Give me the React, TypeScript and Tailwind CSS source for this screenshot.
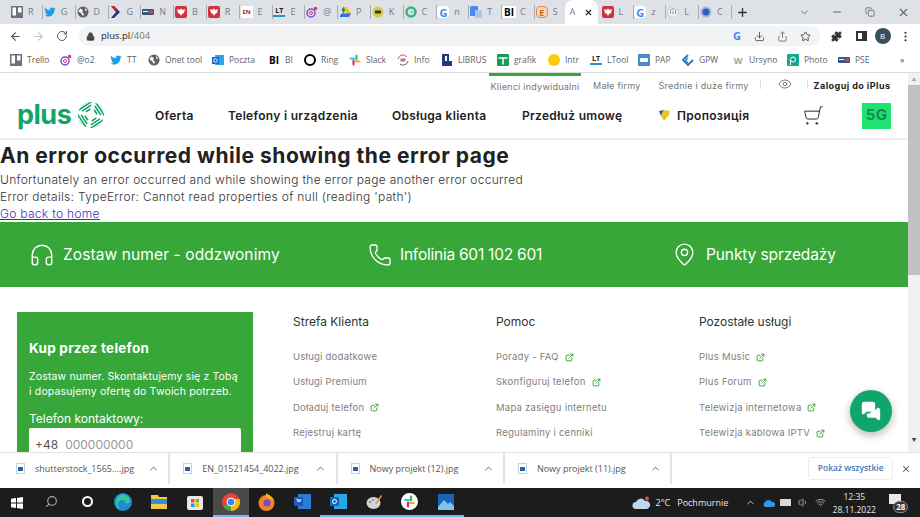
import type { ReactNode } from 'react'
import { ArrowLeft, ArrowRight, ChevronDown, ChevronUp, Eye, Lock, MoreVertical, Plus, Puzzle, RotateCw, Search, Share, ShoppingCart, Star, X, Minus, Copy, Download, Headphones, Phone, MapPin, ExternalLink, MessagesSquare, Volume1, Wifi } from 'lucide-react'

const chrome = 'font-["Open_Sans",sans-serif]'
const site = 'font-["Inter",sans-serif]'

// small coloured favicon squares for the tab strip and bookmarks bar
function Fav({ kind }: { kind: string }) {
  switch (kind) {
    case 'trello':
      return (
        <svg width="12" height="12" viewBox="0 0 12 12"><rect width="12" height="12" fill="#6b7378" /><rect x="1.5" y="1.5" width="3.5" height="8" fill="#fff" /><rect x="7" y="1.5" width="3.5" height="5" fill="#fff" /></svg>
      )
    case 'twitter':
      return (
        <svg width="12" height="12" viewBox="0 0 24 24"><path fill="#1d9bf0" d="M23 4.9c-.8.4-1.7.6-2.6.8.9-.6 1.6-1.4 2-2.5-.9.5-1.8.9-2.9 1.1a4.6 4.6 0 0 0-7.8 4.2C8 8.300 4.600 6.500 2.400 3.700c-1.200 2.100-.6 4.700 1.400 6.100-.7 0-1.400-.2-2.100-.6 0 2.200 1.600 4.100 3.700 4.600-.7.2-1.400.2-2.100.1.6 1.900 2.300 3.200 4.300 3.200A9.300 9.300 0 0 1 .8 19c2.100 1.300 4.500 2.100 7.100 2.100 8.500 0 13.300-7.200 13-13.600.9-.7 1.600-1.500 2.100-2.600z" /></svg>
      )
    case 'globe':
      return (
        <svg width="12" height="12" viewBox="0 0 12 12"><circle cx="6" cy="6" r="5.500" fill="#5f6368" /><path d="M3 2.500 6 4 5 6 7 8 6 10 4 7 1.500 5.500z M8 2l2 2-1.500 1.500z" fill="#fff" /></svg>
      )
    case 'chevron':
      return (
        <svg width="12" height="12" viewBox="0 0 12 12"><path d="M2 0 5 0 11 6 5 12 2 12 7 6z" fill="#20367a" /><path d="M2 0 5 0 8.500 3.500 6 5z" fill="#d1232a" /></svg>
      )
    case 'card':
      return (
        <svg width="12" height="12" viewBox="0 0 12 12"><rect y="3" width="12" height="6" rx="1" fill="#3c5878" /><rect x="7" y="4.500" width="4" height="3" fill="#d3455a" /><rect x="1" y="5" width="5" height="1" fill="#fff" /></svg>
      )
    case 'eagle':
      return (
        <svg width="12" height="12" viewBox="0 0 12 12"><rect width="12" height="12" rx="2" fill="#d2303f" /><path d="M6 2 7 4 10 3 9 7 7 8 6 10 5 8 3 7 2 3 5 4z" fill="#fff" /></svg>
      )
    case 'en':
      return <span className="flex h-3 w-3 items-center justify-center bg-white text-[6px] font-bold leading-none text-[#9c2b35]">EN</span>
    case 'lt':
      return (
        <span className="flex h-3 w-3 flex-col items-center text-[7px] font-bold leading-[9px] text-[#222]">LT<span className="h-[1.500px] w-3 bg-[#2a90c8]" /></span>
      )
    case 'o2':
      return (
        <svg width="12" height="12" viewBox="0 0 12 12" fill="none"><circle cx="5" cy="7" r="4" stroke="#7a4bd8" strokeWidth="1.500" /><circle cx="5" cy="7" r="1.500" stroke="#e0357f" /><circle cx="9.500" cy="2.500" r="1.800" fill="#e0357f" /></svg>
      )
    case 'drive':
      return (
        <svg width="12" height="12" viewBox="0 0 12 12"><path d="M4 1h4l-3.500 6.500-2-3.500z" fill="#0f9d58" /><path d="M8 1l4 7h-4L4.500 1z" fill="#fbbc04" /><path d="M2.500 7.500H12L10 11H.5z" fill="#2f6fe0" /></svg>
      )
    case 'smile':
      return (
        <svg width="12" height="12" viewBox="0 0 12 12"><circle cx="6" cy="6" r="5.500" fill="#d7cb43" /><rect x="3" y="4.500" width="6" height="3" fill="#333" /></svg>
      )
    case 'green':
      return (
        <svg width="12" height="12" viewBox="0 0 12 12" fill="none"><circle cx="6" cy="6" r="4.500" stroke="#35b57f" strokeWidth="2.500" /><circle cx="7" cy="6" r="1.500" fill="#8ed9b8" /></svg>
      )
    case 'g':
      return <span className="flex h-3 w-3 items-center justify-center rounded-sm bg-white text-[11px] font-bold leading-none text-[#4285f4]">G</span>
    case 'translate':
      return (
        <svg width="12" height="12" viewBox="0 0 12 12"><rect width="8" height="10" rx="1" fill="#4d88ea" /><rect x="5" y="4" width="7" height="8" rx="1" fill="#a9c7f5" /></svg>
      )
    case 'bi':
      return <span className="flex h-3 w-3.5 items-center justify-center bg-white text-[10px] font-bold leading-none text-black">BI</span>
    case 'e':
      return <span className="flex h-3 w-3 items-center justify-center rounded-sm border border-[#e08a45] bg-[#f5d6b8] text-[9px] font-bold leading-none text-[#d06a20]">E</span>
    case 'gov':
      return (
        <svg width="12" height="12" viewBox="0 0 12 12" fill="none"><circle cx="6" cy="6" r="5.500" fill="#eef0f0" stroke="#b5bbbb" strokeWidth=".500" /><path d="M2.500 4.500 6 2.500l3.500 2M3.500 5v3M6 5v3M8.500 5v3" stroke="#7a8a8a" strokeWidth=".800" /></svg>
      )
    case 'wp':
      return (
        <svg width="12" height="12" viewBox="0 0 12 12"><circle cx="6" cy="6" r="5.500" fill="#9db8e0" /><circle cx="6" cy="6" r="3.500" fill="#2f5fb0" /></svg>
      )
    case 'outlook':
      return (
        <svg width="12" height="12" viewBox="0 0 12 12"><rect x="3" y="1" width="9" height="10" fill="#28a8ea" /><rect y="3" width="7" height="7" fill="#0f6cbd" /><circle cx="3.500" cy="6.500" r="1.800" fill="none" stroke="#fff" /></svg>
      )
    case 'ring':
      return <span className="block h-3 w-3 rounded-full border-[2.500px] border-black" />
    case 'slack':
      return (
        <svg width="12" height="12" viewBox="0 0 12 12" strokeWidth="2" strokeLinecap="round"><path d="M1.500 4.500h4" stroke="#36c5f0" /><path d="M7.500 1.500v4" stroke="#2eb67d" /><path d="M6.500 7.500h4" stroke="#ecb22e" /><path d="M4.500 6.500v4" stroke="#e01e5a" /></svg>
      )
    case 'info':
      return (
        <svg width="12" height="12" viewBox="0 0 12 12" fill="none"><path d="M1 5a5 5 0 0 1 9-2" stroke="#d9534f" /><path d="M11 7a5 5 0 0 1-8 3" stroke="#4a5a8a" /><rect x="3.500" y="4.500" width="5" height="3" fill="#c86a8a" /></svg>
      )
    case 'librus':
      return (
        <svg width="12" height="12" viewBox="0 0 12 12"><path d="M1 0h7v7h3v5H1z" fill="#1f3a7a" /><rect x="4" y="2" width="2" height="5" fill="#fff" /></svg>
      )
    case 'sheet':
      return (
        <svg width="12" height="12" viewBox="0 0 12 12"><rect width="12" height="12" rx="1" fill="#1a9a58" /><path d="M1.500 4h9M6 4v6.500" stroke="#fff" strokeWidth="1.500" /></svg>
      )
    case 'dot':
      return <span className="block h-3 w-3 rounded-full bg-[#fbcb0a]" />
    case 'pap':
      return (
        <svg width="12" height="12" viewBox="0 0 12 12"><rect width="12" height="12" fill="#4a8cc8" /><rect x="2" y="4" width="8" height="4" rx="1" fill="#fff" /></svg>
      )
    case 'gpw':
      return (
        <svg width="12" height="12" viewBox="0 0 12 12" fill="none"><path d="M6 1 1 6l5 5 5-5" stroke="#1f74c2" strokeWidth="1.800" /><path d="M6 4 3.500 6.500 6 9" stroke="#2a9ad8" strokeWidth="1.500" /></svg>
      )
    case 'ursyno':
      return <span className="flex h-3 w-3 items-center justify-center text-[9px] font-bold leading-none text-[#9aa39a]">W</span>
    case 'photo':
      return (
        <svg width="12" height="12" viewBox="0 0 12 12" fill="none"><rect width="12" height="12" rx="1" fill="#17a88f" /><circle cx="6" cy="5.500" r="2.500" stroke="#fff" /><path d="M3.500 5.500V11" stroke="#fff" /></svg>
      )
    default:
      return null
  }
}

const tabs = [
  ['trello', 'R'], ['twitter', 'G'], ['globe', 'D'], ['chevron', 'G'], ['card', 'N'], ['eagle', 'B'], ['eagle', 'R'],
  ['en', 'E'], ['lt', 'E'], ['o2', '@'], ['drive', 'P'], ['smile', 'K'], ['green', 'C'], ['g', 'n'], ['translate', 'T'],
  ['bi', 'C'], ['e', 'S'],
]
const tabsAfter = [['eagle', 'L'], ['g', 'z'], ['gov', 'L'], ['wp', 'C']]

const bookmarks = [
  { icon: 'trello', label: 'Trello', w: 'w-[50px]' },
  { icon: 'o2', label: '@o2', w: 'w-[50px]' },
  { icon: 'twitter', label: 'TT', w: 'w-[38px]' },
  { icon: 'globe', label: 'Onet tool', w: 'w-[64px]' },
  { icon: 'outlook', label: 'Poczta', w: 'w-[56px]' },
  { icon: 'bi', label: 'BI', w: 'w-[36px]' },
  { icon: 'ring', label: 'Ring', w: 'w-[45px]' },
  { icon: 'slack', label: 'Slack', w: 'w-[48px]' },
  { icon: 'info', label: 'Info', w: 'w-[44px]' },
  { icon: 'librus', label: 'LIBRUS', w: 'w-[56px]' },
  { icon: 'sheet', label: 'grafik', w: 'w-[51px]' },
  { icon: 'dot', label: 'Intr', w: 'w-[42px]' },
  { icon: 'lt', label: 'LTool', w: 'w-[48px]' },
  { icon: 'pap', label: 'PAP', w: 'w-[44px]' },
  { icon: 'gpw', label: 'GPW', w: 'w-[50px]' },
  { icon: 'ursyno', label: 'Ursyno', w: 'w-[55px]' },
  { icon: 'photo', label: 'Photo', w: 'w-[51px]' },
  { icon: 'card', label: 'PSE', w: 'w-[63px]' },
]

const columns = [
  { title: 'Strefa Klienta', links: [['Usługi dodatkowe', false], ['Usługi Premium', false], ['Doładuj telefon', true], ['Rejestruj kartę', false]] },
  { title: 'Pomoc', links: [['Porady - FAQ', true], ['Skonfiguruj telefon', true], ['Mapa zasięgu internetu', false], ['Regulaminy i cenniki', false]] },
  { title: 'Pozostałe usługi', links: [['Plus Music', true], ['Plus Forum', true], ['Telewizja internetowa', true], ['Telewizja kablowa IPTV', true]] },
] as const

const downloads = ['shutterstock_1565....jpg', 'EN_01521454_4022.jpg', 'Nowy projekt (12).jpg', 'Nowy projekt (11).jpg']

function Tab({ icon, letter }: { icon: string; letter: string }) {
  return (
    <div className="flex h-6 w-[32.8px] shrink-0 items-center gap-1 pl-[3px]">
      <span className="flex w-3.5 shrink-0 justify-center"><Fav kind={icon} /></span>
      <span className="w-[10px] shrink-0 text-[9px] text-[#777b80]">{letter}</span>
      <span className="h-[14px] border-r border-[#a9adb2]" />
    </div>
  )
}

function Logo() {
  return (
    <div className="mb-[3px] flex w-[86px] shrink-0 items-center gap-[7px]">
      <span className="text-[27px] font-bold leading-none tracking-[-0.5px] text-[#12a568]">plus</span>
      <svg width="26" height="26" viewBox="0 0 27 27" className="mt-[2px] shrink-0" fill="none" stroke="#12a568" strokeWidth="1.700">
        <defs><clipPath id="plus-circle"><circle cx="13.500" cy="13.500" r="13.500" /></clipPath></defs>
        <g clipPath="url(#plus-circle)">
          <g transform="rotate(12 13.500 13.500)">
            {[0, 90, 180, 270].map((r) => (
              <path key={r} transform={`rotate(${r} 13.500 13.500)`} d="M15.500 7.500 19.500 11.500M15.500 3.500 23.500 11.500M15.500 -.5 27.500 11.500M19 -1 29 9" />
            ))}
          </g>
        </g>
      </svg>
    </div>
  )
}

function Edge() {
  return (
    <svg width="18" height="18" viewBox="0 0 18 18"><circle cx="9" cy="9" r="9" fill="#1b8ed2" /><path d="M2 9a7 7 0 0 1 14-1c0 3-5 3-5 1 0-3-7-3-7 3 0 2 1 4 3 5-3 0-5-4-5-8z" fill="#36c5a0" /></svg>
  )
}

function Slot({ children, running }: { children: ReactNode; running?: boolean }) {
  return (
    <div className={`flex h-[29px] w-[35.8px] shrink-0 items-center justify-center border-b-2 ${running ? 'border-[#76b9ed]' : 'border-transparent'}`}>
      {children}
    </div>
  )
}

export default function App() {
  return (
    <div className={`flex h-[517px] w-[920px] flex-col overflow-hidden bg-white ${chrome}`}>
      {/* tab strip */}
      <div className="flex h-6 shrink-0 items-center bg-[#dee1e6] pl-[7px]">
        {tabs.map(([icon, letter], i) => <Tab key={i} icon={icon} letter={letter} />)}
        <div className="flex h-6 w-[33px] shrink-0 items-center justify-between rounded-t-lg bg-white px-[5px]">
          <span className="text-[9px] text-[#777b80]">A</span>
          <X size={9} strokeWidth={3} className="text-[#222]" />
        </div>
        {tabsAfter.map(([icon, letter], i) => <Tab key={i} icon={icon} letter={letter} />)}
        <Plus size={13} strokeWidth={2.500} className="ml-[7px] text-[#333]" />
        <ChevronDown size={11} className="ml-[50px] text-[#666]" />
        <Minus size={12} className="ml-[21.500px] text-[#666]" />
        <Copy size={10} className="ml-[22px] text-[#666]" />
        <X size={13} className="ml-[21.500px] text-[#666]" />
      </div>

      {/* address bar */}
      <div className="flex h-6 shrink-0 items-center bg-white pl-[9px]">
        <ArrowLeft size={13} className="text-[#555]" />
        <ArrowRight size={13} className="ml-[10px] text-[#c3c5c8]" />
        <RotateCw size={12} className="ml-[11px] text-[#555]" />
        <div className="ml-[11px] flex h-5 w-[569px] items-center rounded-l-full bg-[#f1f3f4] pl-[7px]">
          <Lock size={9} fill="#444" className="text-[#444]" />
          <span className="ml-[6px] text-[9.500px] text-[#222]">plus.pl<span className="text-[#70757a]">/404</span></span>
        </div>
        <div className="flex h-5 w-[172px] items-center rounded-r-full bg-[#f1f3f4] pl-[85px]">
          <span className="text-[11px] font-bold text-[#4285f4]">G</span>
          <Download size={11} className="ml-[13px] text-[#555]" />
          <Share size={11} className="ml-[12px] text-[#777]" />
          <Star size={11} className="ml-[12px] text-[#444]" />
        </div>
        <Puzzle size={11} fill="#333" className="ml-[10.500px] text-[#333]" />
        <span className="ml-[14px] block h-[10px] w-[11px] border-2 border-r-[5px] border-[#333]" />
        <span className="ml-[8px] flex h-4 w-4 items-center justify-center rounded-full bg-[#37505f] text-[8px] text-white">B</span>
        <MoreVertical size={13} className="ml-[8.500px] text-[#333]" />
      </div>

      {/* bookmarks */}
      <div className="flex h-[25px] shrink-0 items-center border-b border-[#dadce0] pl-[9px]">
        {bookmarks.map((b) => (
          <div key={b.label} className={`flex shrink-0 items-center gap-[4px] ${b.w}`}>
            <span className="flex w-3.5 justify-center"><Fav kind={b.icon} /></span>
            <span className="text-[8.500px] text-[#5f6368]">{b.label}</span>
          </div>
        ))}
        <span className="text-[9px] text-[#555]">»</span>
      </div>

      {/* page */}
      <div className={`relative flex h-[379px] shrink-0 overflow-hidden ${site}`}>
        <div className="w-[908px] shrink-0">
          <header className="h-[67px] border-b-[2px] border-[#f0f0f0]">
            <div className="flex h-[22px] pl-[489px] text-[9px] tracking-[0.25px] text-[#777]">
              <span className="flex h-full w-[92px] items-center justify-center border-t-[3px] border-[#36a738] pt-[3px]">Klienci indywidualni</span>
              <span className="ml-[12px] flex items-center pt-[3px]">Małe firmy</span>
              <span className="ml-[18px] flex items-center pt-[3px]">Średnie i duże firmy</span>
              <span className="ml-[11px] mt-[7px] h-[9px] border-l border-[#ddd]" />
              <Eye size={14} strokeWidth={1.200} className="ml-[17px] mt-[4px] text-[#444]" />
              <span className="ml-[15px] mt-[7px] h-[9px] border-l border-[#ddd]" />
              <span className="ml-[6px] flex items-center pt-[3px] font-bold tracking-[0.45px] text-[#222]">Zaloguj do iPlus</span>
            </div>
            <div className="flex h-[43px] items-center whitespace-nowrap pb-[2px] pl-[17px] text-[12px] font-semibold tracking-[0.3px] text-[#222]">
              <Logo />
              <span className="ml-[52px] w-[38px] shrink-0">Oferta</span>
              <span className="ml-[35px] w-[129px] shrink-0">Telefony i urządzenia</span>
              <span className="ml-[35px] w-[95px] shrink-0">Obsługa klienta</span>
              <span className="ml-[35px] w-[101px] shrink-0">Przedłuż umowę</span>
              <svg width="13" height="11" viewBox="0 0 13 11" className="ml-[35px] shrink-0"><path d="M1 1 6 0 3 6z" fill="#2f5fb0" /><path d="M6 0 12 1 11 5 6 11 3 6z" fill="#f0c419" /></svg>
              <span className="ml-[6px] w-[74px] shrink-0">Пропозиція</span>
              <ShoppingCart size={21} strokeWidth={1.100} className="ml-[52px] shrink-0 -scale-x-100 text-[#222]" />
              <span className="ml-[38px] flex h-[26px] w-[29px] shrink-0 items-center justify-center bg-[#1ee36f] text-[15px] font-bold text-[#0f8a55]">5G</span>
            </div>
          </header>
          <main className="pt-[4px] text-[#333]">
            <h1 className="text-[21px] font-bold leading-[24px] tracking-[0.53px] text-[#222]">An error occurred while showing the error page</h1>
            <p className="mt-[3px] text-[12px] font-light leading-[17px] tracking-[0.3px]">Unfortunately an error occurred and while showing the error page another error occurred</p>
            <p className="text-[12px] font-light leading-[17px] tracking-[0.3px]">Error details: TypeError: Cannot read properties of null (reading 'path')</p>
            <a className="block text-[12px] font-light leading-[17px] tracking-[0.3px] text-[#3b32b5] underline">Go back to home</a>
          </main>
          <div className="flex h-[65px] items-center bg-[#36a738] pl-[29px] text-[15.500px] font-normal text-white">
            <Headphones size={26} strokeWidth={1.300} />
            <span className="ml-[8px] w-[305px] tracking-[0.1px]">Zostaw numer - oddzwonimy</span>
            <Phone size={24} strokeWidth={1.300} />
            <span className="ml-[8px] w-[273px] tracking-[-0.24px]">Infolinia 601 102 601</span>
            <MapPin size={25} strokeWidth={1.300} className="-ml-[1px]" />
            <span className="ml-[9px] tracking-[-0.1px]">Punkty sprzedaży</span>
          </div>
          <div className="flex pl-[17px] pt-[25px]">
            <div className="h-[200px] w-[236px] shrink-0 bg-[#36a738] px-[12px] pt-[28px] text-white">
              <div className="text-[13.500px] font-bold leading-[16px] tracking-[0.25px]">Kup przez telefon</div>
              <p className="mt-[13px] text-[10.500px] leading-[15px] tracking-[0.15px]">Zostaw numer. Skontaktujemy się z Tobą<br />i dopasujemy ofertę do Twoich potrzeb.</p>
              <div className="mt-[12px] text-[12px] leading-[15px]">Telefon kontaktowy:</div>
              <div className="mt-[2px] flex h-[40px] rounded-t-[2px] bg-white pl-[6px] pt-[8px] text-[12px] text-[#555]">+48<span className="ml-[7px] text-[#999]">000000000</span></div>
            </div>
            <div className="ml-[40px] flex">
              {columns.map((c) => (
                <div key={c.title} className="w-[203px] shrink-0 pt-[2px]">
                  <div className="text-[12px] leading-[16px] text-[#333]">{c.title}</div>
                  <ul className="mt-[20px] flex flex-col gap-[11px]">
                    {c.links.map(([label, ext]) => (
                      <li key={label} className="flex h-[14.300px] items-center gap-[6px] text-[9.500px] tracking-[0.25px] text-[#808080]">
                        {label}
                        {ext && <ExternalLink size={9} strokeWidth={2.500} className="text-[#36a738]" />}
                      </li>
                    ))}
                  </ul>
                </div>
              ))}
            </div>
          </div>
        </div>

        {/* scrollbar */}
        <div className="flex w-[12px] shrink-0 flex-col bg-[#f1f1f1]">
          <span className="h-[12px] pt-[4px] text-center text-[5px] leading-none text-[#aaa]">▲</span>
          <span className="h-[190px] bg-[#c1c1c1]" />
          <span className="mt-auto h-[14px] text-center text-[5px] leading-none text-[#444]">▼</span>
        </div>

        {/* chat button */}
        <button className="absolute left-[850px] top-[317px] flex h-[42px] w-[42px] items-center justify-center rounded-full bg-[#12a56b] shadow-[0_3px_8px_rgba(0,0,0,0.3)]">
          <MessagesSquare size={20} fill="#fff" className="text-white" />
        </button>
      </div>

      {/* downloads shelf */}
      <div className="flex h-[36px] shrink-0 items-center border-t border-[#e3e3e3] bg-white pb-[4px] pl-[3px]">
        {downloads.map((d) => (
          <div key={d} className="flex h-[31px] w-[167.300px] shrink-0 items-center border-r-2 border-[#e4e4e4] pl-[13px]">
            <span className="flex h-[11px] w-[9px] items-center justify-center border border-[#c5d3e0] bg-white"><span className="h-[4px] w-[5px] bg-[#2b5fa8]" /></span>
            <span className="ml-[10px] w-[108px] shrink-0 text-[9px] text-[#555]">{d}</span>
            <ChevronUp size={11} className="ml-[5px] text-[#555]" />
          </div>
        ))}
        <button className="ml-[136px] flex h-[23px] w-[85px] items-center justify-center rounded-[3px] border border-[#ececec] text-[8.500px] font-semibold text-[#4a78b8]">Pokaż wszystkie</button>
        <X size={10} strokeWidth={2.500} className="ml-[8px] text-[#555]" />
      </div>

      {/* taskbar */}
      <div className="flex h-[29px] shrink-0 items-center bg-[#1c1c1c] text-[#e8e8e8]">
        <div className="flex w-[34px] shrink-0 justify-center">
          <svg width="12" height="12" viewBox="0 0 12 12" fill="#fff"><path d="M0 1.800 5 1v4.500H0zM6 .9 12 0v5.500H6zM0 6.500h5V11l-5-.8zM6 6.500h6V12l-6-.9z" /></svg>
        </div>
        <Slot><Search size={13} className="-scale-x-100 text-[#aaa]" /></Slot>
        <Slot><span className="h-[11px] w-[11px] rounded-full border-2 border-white" /></Slot>
        <Slot><Edge /></Slot>
        <Slot>
          <svg width="16" height="14" viewBox="0 0 16 14"><path d="M0 0h7l1 2h8v12H0z" fill="#f5c748" /><rect y="4" width="16" height="5" fill="#2f90d8" /></svg>
        </Slot>
        <Slot>
          <svg width="16" height="16" viewBox="0 0 16 16"><rect y="2" width="16" height="14" rx="2" fill="#e8e8e8" /><rect x="4" y="5" width="3.500" height="3.500" fill="#f25022" /><rect x="8.500" y="5" width="3.500" height="3.500" fill="#7fba00" /><rect x="4" y="9.500" width="3.500" height="3.500" fill="#00a4ef" /><rect x="8.500" y="9.500" width="3.500" height="3.500" fill="#ffb900" /></svg>
        </Slot>
        <div className="flex h-[29px] w-[35.8px] shrink-0 items-center justify-center border-b-2 border-[#76b9ed] bg-[#4a4a4a]">
          <svg width="18" height="18" viewBox="0 0 18 18"><circle cx="9" cy="9" r="9" fill="#ea4335" /><path d="M9 9 1.500 13.500A9 9 0 0 0 9 18z" fill="#34a853" /><path d="M9 9 9 18A9 9 0 0 0 17.500 6H9z" fill="#fbbc04" /><circle cx="9" cy="9" r="4" fill="#4285f4" stroke="#fff" /></svg>
        </div>
        <Slot>
          <svg width="17" height="18" viewBox="0 0 17 18"><circle cx="8.500" cy="10" r="8" fill="#f5821f" /><path d="M8 0c3 2 6 3 8 8-2-2-5-3-8-3z" fill="#fcb021" /><circle cx="9" cy="10" r="3.500" fill="#7542e5" /></svg>
        </Slot>
        <Slot>
          <svg width="17" height="15" viewBox="0 0 17 15"><rect x="4" width="13" height="15" fill="#2b7cd3" /><rect y="3" width="9" height="9" fill="#185abd" /><path d="M2 5h1l1 3 1-3 1 3 1-3" stroke="#fff" fill="none" strokeWidth=".700" /></svg>
        </Slot>
        <Slot running>
          <svg width="17" height="15" viewBox="0 0 17 15"><rect x="4" width="13" height="15" fill="#28a8ea" /><rect y="3" width="9" height="9" fill="#0f6cbd" /><circle cx="4.500" cy="7.500" r="2" fill="none" stroke="#fff" /></svg>
        </Slot>
        <Slot running>
          <svg width="17" height="16" viewBox="0 0 17 16"><ellipse cx="7.500" cy="9" rx="7" ry="6" fill="#cfd4d8" /><circle cx="4" cy="8" r="1" fill="#e0443e" /><circle cx="7" cy="6" r="1" fill="#3f8ed8" /><path d="M9 9 15 1l1 1-5 8z" fill="#d8a34a" /></svg>
        </Slot>
        <Slot running>
          <svg width="17" height="17" viewBox="0 0 17 17" strokeWidth="2.200" strokeLinecap="round"><circle cx="8.500" cy="8.500" r="8.500" fill="#fff" /><path d="M4 7h4" stroke="#36c5f0" /><path d="M10 3.500v4" stroke="#2eb67d" /><path d="M9 10h4" stroke="#ecb22e" /><path d="M7 9.500v4" stroke="#e01e5a" /></svg>
        </Slot>
        <Slot running>
          <svg width="16" height="16" viewBox="0 0 16 16"><rect width="16" height="16" fill="#1565b8" /><path d="M0 13 6 6l4 4 2-2 4 4v4H0z" fill="#7fc4f0" /></svg>
        </Slot>
        <div className="ml-[168px] flex shrink-0 items-center text-[9px]">
          <svg width="19" height="14" viewBox="0 0 19 14"><path d="M4 13a3.500 3.500 0 0 1 0-7 5 5 0 0 1 9-1 4 4 0 0 1 2 8z" fill="#bcd6ee" /><circle cx="15" cy="2.500" r="2" fill="#e04a3a" /></svg>
          <span className="ml-[5px]">2°C</span>
          <span className="ml-[7px]">Pochmurnie</span>
        </div>
        <ChevronUp size={11} className="ml-[16.500px] shrink-0 text-[#ccc]" />
        <svg width="13" height="8" viewBox="0 0 13 8" className="ml-[6px] shrink-0"><path d="M3 8a3 3 0 0 1 0-5 4 4 0 0 1 7 0 2.500 2.500 0 0 1 1 5z" fill="#2a9be8" /></svg>
        <span className="ml-[5px] block h-[7px] w-[11px] shrink-0 bg-[#d8d8d8]" />
        <Volume1 size={11} className="ml-[7px] shrink-0 text-[#aaa]" />
        <Wifi size={11} className="ml-[6px] shrink-0 text-[#aaa]" />
        <div className="ml-[4.500px] flex w-[48px] shrink-0 flex-col items-center text-[8.500px] leading-[13px]">
          <span>12:35</span>
          <span>28.11.2022</span>
        </div>
        <div className="relative ml-[10px] h-[20px] w-[20px] shrink-0">
          <span className="absolute left-[1px] top-[1px] block h-[10px] w-[12px] bg-[#e8e8e8]" />
          <span className="absolute bottom-0 right-0 flex h-[12px] w-[15px] items-center justify-center rounded-full border border-[#888] bg-[#333] text-[8px] font-bold text-white">28</span>
        </div>
      </div>
    </div>
  )
}
